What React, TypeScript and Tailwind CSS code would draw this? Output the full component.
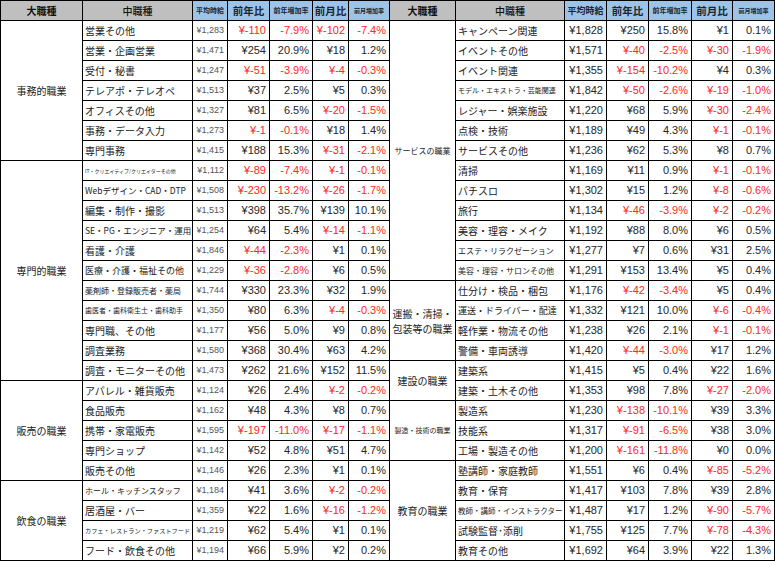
import React from "react";

type Row = {
  name: string;
  size: string;
  avg: string;
  yoy: string;
  yoyPct: string;
  mom: string;
  momPct: string;
};

type Group = { label: React.ReactNode; labelClass: string; rows: Row[] };

const r = (name: string, size: string, avg: string, yoy: string, yoyPct: string, mom: string, momPct: string): Row => ({
  name,
  size,
  avg,
  yoy,
  yoyPct,
  mom,
  momPct,
});

const leftGroups: Group[] = [
  {
    label: "事務的職業",
    labelClass: "text-[10px]",
    rows: [
      r("営業その他", "text-[10px]", "¥1,283", "¥-110", "-7.9%", "¥-102", "-7.4%"),
      r("営業・企画営業", "text-[10px]", "¥1,471", "¥254", "20.9%", "¥18", "1.2%"),
      r("受付・秘書", "text-[10px]", "¥1,247", "¥-51", "-3.9%", "¥-4", "-0.3%"),
      r("テレアポ・テレオペ", "text-[10px]", "¥1,513", "¥37", "2.5%", "¥5", "0.3%"),
      r("オフィスその他", "text-[10px]", "¥1,327", "¥81", "6.5%", "¥-20", "-1.5%"),
      r("事務・データ入力", "text-[10px]", "¥1,273", "¥-1", "-0.1%", "¥18", "1.4%"),
      r("専門事務", "text-[10px]", "¥1,415", "¥188", "15.3%", "¥-31", "-2.1%"),
    ],
  },
  {
    label: "専門的職業",
    labelClass: "text-[10px]",
    rows: [
      r("IT・クリエイティブ/クリエイターその他", "text-[5px]", "¥1,112", "¥-89", "-7.4%", "¥-1", "-0.1%"),
      r("Webデザイン・CAD・DTP", "text-[8.5px]", "¥1,508", "¥-230", "-13.2%", "¥-26", "-1.7%"),
      r("編集・制作・撮影", "text-[10px]", "¥1,513", "¥398", "35.7%", "¥139", "10.1%"),
      r("SE・PG・エンジニア・運用", "text-[8.5px]", "¥1,254", "¥64", "5.4%", "¥-14", "-1.1%"),
      r("看護・介護", "text-[10px]", "¥1,846", "¥-44", "-2.3%", "¥1", "0.1%"),
      r("医療・介護・福祉その他", "text-[9px]", "¥1,229", "¥-36", "-2.8%", "¥6", "0.5%"),
      r("薬剤師・登録販売者・薬局", "text-[8px]", "¥1,744", "¥330", "23.3%", "¥32", "1.9%"),
      r("歯医者・歯科衛生士・歯科助手", "text-[7px]", "¥1,350", "¥80", "6.3%", "¥-4", "-0.3%"),
      r("専門職、その他", "text-[10px]", "¥1,177", "¥56", "5.0%", "¥9", "0.8%"),
      r("調査業務", "text-[10px]", "¥1,580", "¥368", "30.4%", "¥63", "4.2%"),
      r("調査・モニターその他", "text-[10px]", "¥1,473", "¥262", "21.6%", "¥152", "11.5%"),
    ],
  },
  {
    label: "販売の職業",
    labelClass: "text-[10px]",
    rows: [
      r("アパレル・雑貨販売", "text-[10px]", "¥1,124", "¥26", "2.4%", "¥-2", "-0.2%"),
      r("食品販売", "text-[10px]", "¥1,162", "¥48", "4.3%", "¥8", "0.7%"),
      r("携帯・家電販売", "text-[10px]", "¥1,595", "¥-197", "-11.0%", "¥-17", "-1.1%"),
      r("専門ショップ", "text-[10px]", "¥1,142", "¥52", "4.8%", "¥51", "4.7%"),
      r("販売その他", "text-[10px]", "¥1,146", "¥26", "2.3%", "¥1", "0.1%"),
    ],
  },
  {
    label: "飲食の職業",
    labelClass: "text-[10px]",
    rows: [
      r("ホール・キッチンスタッフ", "text-[8px]", "¥1,184", "¥41", "3.6%", "¥-2", "-0.2%"),
      r("居酒屋・バー", "text-[10px]", "¥1,359", "¥22", "1.6%", "¥-16", "-1.2%"),
      r("カフェ・レストラン・ファストフード", "text-[6.2px]", "¥1,219", "¥62", "5.4%", "¥1", "0.1%"),
      r("フード・飲食その他", "text-[10px]", "¥1,194", "¥66", "5.9%", "¥2", "0.2%"),
    ],
  },
];

const rightGroups: Group[] = [
  {
    label: "サービスの職業",
    labelClass: "text-[8px]",
    rows: [
      r("キャンペーン関連", "text-[10px]", "¥1,828", "¥250", "15.8%", "¥1", "0.1%"),
      r("イベントその他", "text-[10px]", "¥1,571", "¥-40", "-2.5%", "¥-30", "-1.9%"),
      r("イベント関連", "text-[10px]", "¥1,355", "¥-154", "-10.2%", "¥4", "0.3%"),
      r("モデル・エキストラ・芸能関連", "text-[7px]", "¥1,842", "¥-50", "-2.6%", "¥-19", "-1.0%"),
      r("レジャー・娯楽施設", "text-[10px]", "¥1,220", "¥68", "5.9%", "¥-30", "-2.4%"),
      r("点検・技術", "text-[10px]", "¥1,189", "¥49", "4.3%", "¥-1", "-0.1%"),
      r("サービスその他", "text-[10px]", "¥1,236", "¥62", "5.3%", "¥8", "0.7%"),
      r("清掃", "text-[10px]", "¥1,169", "¥11", "0.9%", "¥-1", "-0.1%"),
      r("パチスロ", "text-[10px]", "¥1,302", "¥15", "1.2%", "¥-8", "-0.6%"),
      r("旅行", "text-[10px]", "¥1,134", "¥-46", "-3.9%", "¥-2", "-0.2%"),
      r("美容・理容・メイク", "text-[10px]", "¥1,192", "¥88", "8.0%", "¥6", "0.5%"),
      r("エステ・リラクゼーション", "text-[8px]", "¥1,277", "¥7", "0.6%", "¥31", "2.5%"),
      r("美容・理容・サロンその他", "text-[8px]", "¥1,291", "¥153", "13.4%", "¥5", "0.4%"),
    ],
  },
  {
    label: (
      <>
        運搬・清掃・
        <br />
        包装等の職業
      </>
    ),
    labelClass: "text-[10px] leading-[15px]",
    rows: [
      r("仕分け・検品・梱包", "text-[10px]", "¥1,176", "¥-42", "-3.4%", "¥5", "0.4%"),
      r("運送・ドライバー・配達", "text-[9px]", "¥1,332", "¥121", "10.0%", "¥-6", "-0.4%"),
      r("軽作業・物流その他", "text-[10px]", "¥1,238", "¥26", "2.1%", "¥-1", "-0.1%"),
      r("警備・車両誘導", "text-[10px]", "¥1,420", "¥-44", "-3.0%", "¥17", "1.2%"),
    ],
  },
  {
    label: "建設の職業",
    labelClass: "text-[10px]",
    rows: [
      r("建築系", "text-[10px]", "¥1,415", "¥5", "0.4%", "¥22", "1.6%"),
      r("建築・土木その他", "text-[10px]", "¥1,353", "¥98", "7.8%", "¥-27", "-2.0%"),
    ],
  },
  {
    label: "製造・技術の職業",
    labelClass: "text-[7px]",
    rows: [
      r("製造系", "text-[10px]", "¥1,230", "¥-138", "-10.1%", "¥39", "3.3%"),
      r("技能系", "text-[10px]", "¥1,317", "¥-91", "-6.5%", "¥38", "3.0%"),
      r("工場・製造その他", "text-[10px]", "¥1,200", "¥-161", "-11.8%", "¥0", "0.0%"),
    ],
  },
  {
    label: "教育の職業",
    labelClass: "text-[10px]",
    rows: [
      r("塾講師・家庭教師", "text-[10px]", "¥1,551", "¥6", "0.4%", "¥-85", "-5.2%"),
      r("教育・保育", "text-[10px]", "¥1,417", "¥103", "7.8%", "¥39", "2.8%"),
      r("教師・講師・インストラクター", "text-[7.5px]", "¥1,487", "¥17", "1.2%", "¥-90", "-5.7%"),
      r("試験監督･添削", "text-[10px]", "¥1,755", "¥125", "7.7%", "¥-78", "-4.3%"),
      r("教育その他", "text-[10px]", "¥1,692", "¥64", "3.9%", "¥22", "1.3%"),
    ],
  },
];

type Flat = { group?: Group; span: number; row: Row };

function flatten(groups: Group[]): Flat[] {
  const out: Flat[] = [];
  groups.forEach((g) => {
    g.rows.forEach((row, i) => {
      out.push({ group: i === 0 ? g : undefined, span: g.rows.length, row });
    });
  });
  return out;
}

const cell = "border border-black p-0 h-[20px] align-middle";
const num = "font-['Liberation_Sans','Noto_Sans_CJK_JP',sans-serif] text-right pr-[3px] whitespace-nowrap";

function tone(v: string) {
  return v.includes("-") ? "text-[#ff2626]" : "text-[#262626]";
}

function Cells({ item, small }: { item: Flat; small: boolean }) {
  const { group, span, row } = item;
  return (
    <>
      {group ? (
        <td rowSpan={span} className={`${cell} text-center text-[#222] ${group.labelClass}`}>
          {group.label}
        </td>
      ) : null}
      <td className={`${cell} pl-[2px] whitespace-nowrap overflow-hidden text-[#222] ${row.size}`}>{row.name}</td>
      <td className={`${cell} ${num} ${small ? "text-[9px] text-[#555]" : "text-[11px] text-[#262626]"}`}>{row.avg}</td>
      <td className={`${cell} ${num} text-[11px] ${tone(row.yoy)}`}>{row.yoy}</td>
      <td className={`${cell} ${num} text-[11px] ${tone(row.yoyPct)}`}>{row.yoyPct}</td>
      <td className={`${cell} ${num} text-[11px] ${tone(row.mom)}`}>{row.mom}</td>
      <td className={`${cell} ${num} text-[11px] ${tone(row.momPct)}`}>{row.momPct}</td>
    </>
  );
}

function HeaderCells({ small }: { small: boolean }) {
  const gray = `${cell} bg-[#bfbfbf] text-center text-[10px] text-[#111]`;
  const blue = `${cell} bg-[#9dc3e6] text-center text-[#1c2633] font-bold whitespace-nowrap`;
  return (
    <>
      <th className={`${gray} font-bold`}>大職種</th>
      <th className={`${gray} font-medium`}>中職種</th>
      <th className={`${blue} ${small ? "text-[7px]" : "text-[9px]"}`}>平均時給</th>
      <th className={`${blue} text-[10.5px]`}>前年比</th>
      <th className={`${blue} text-[7px]`}>前年増加率</th>
      <th className={`${blue} text-[10.5px]`}>前月比</th>
      <th className={`${blue} text-[6px]`}>前月増加率</th>
    </>
  );
}

export default function App() {
  const left = flatten(leftGroups);
  const right = flatten(rightGroups);
  const widths = [82, 110, 35, 42, 43, 36, 41, 66, 109, 42, 42, 43, 41, 42];

  return (
    <div className="w-[775px] h-[561px] bg-white font-['Noto_Sans_CJK_JP',sans-serif]">
      <table className="table-fixed border-collapse w-[775px] border border-black">
        <colgroup>
          {widths.map((w, i) => (
            <col key={i} style={{ width: w }} />
          ))}
        </colgroup>
        <thead>
          <tr>
            <HeaderCells small />
            <HeaderCells small={false} />
          </tr>
        </thead>
        <tbody>
          {left.map((item, i) => (
            <tr key={i}>
              <Cells item={item} small />
              <Cells item={right[i]} small={false} />
            </tr>
          ))}
        </tbody>
      </table>
    </div>
  );
}
